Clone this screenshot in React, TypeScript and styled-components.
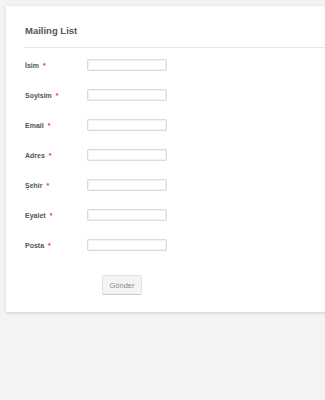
import styled, { createGlobalStyle } from "styled-components";

const GlobalStyle = createGlobalStyle`
	html, body {
		margin: 0;
		padding: 0;
		background: #f3f3f3;
		overflow: hidden;
		font-family: "Liberation Sans", Arial, sans-serif;
	}
`;

const fields = ["İsim", "Soyisim", "Email", "Adres", "Şehir", "Eyalet", "Posta"];

const App = () => {
	return (
		<>
			<GlobalStyle />
			<Page>
				<Card>
					<Header>
						<Title>Mailing List</Title>
					</Header>
					<Form>
						{fields.map((field) => (
							<Row key={field}>
								<Label>
									{field}
									<Required>*</Required>
								</Label>
								<Input type="text" />
							</Row>
						))}
						<ButtonRow>
							<SubmitButton type="button">Gönder</SubmitButton>
						</ButtonRow>
					</Form>
				</Card>
			</Page>
		</>
	);
};

export default App;

const Page = styled.div`
	width: 325px;
	height: 400px;
	padding: 6px 0 0 6px;
	box-sizing: border-box;
	overflow: hidden;
`;

const Card = styled.div`
	width: 360px;
	padding: 18px 0 17px 18px;
	box-sizing: border-box;
	background: #ffffff;
	box-shadow: 0 1px 3px rgba(0, 0, 0, 0.16);
`;

const Header = styled.div`
	padding: 0 0 10px 1px;
	border-bottom: 1px solid #e6e6e6;
`;

const Title = styled.h1`
	margin: 0;
	font-size: 9.5px;
	line-height: 13px;
	font-weight: 700;
	color: #555555;
`;

const Form = styled.form`
	display: flex;
	flex-direction: column;
	gap: 18px;
	padding: 11px 0 0 1px;
`;

const Row = styled.div`
	display: flex;
	align-items: center;
	height: 12px;
`;

const Label = styled.label`
	width: 62px;
	font-size: 7px;
	font-weight: 700;
	color: #555555;
`;

const Required = styled.span`
	margin-left: 4px;
	color: #e03c3c;
`;

const Input = styled.input`
	width: 80px;
	height: 12px;
	margin: 0;
	padding: 0;
	box-sizing: border-box;
	border: 1px solid #dcdcdc;
	border-radius: 1px;
	box-shadow: inset 0 0 0 1px #f2f2f2;
	background: #ffffff;
	outline: none;
`;

const ButtonRow = styled.div`
	display: flex;
	padding: 6px 0 0 77px;
`;

const SubmitButton = styled.button`
	width: 40px;
	height: 20px;
	padding: 0;
	border: 1px solid #e0e0e0;
	border-bottom: 1px dotted #a8a8a8;
	border-radius: 2px;
	background: #f4f4f4;
	font-family: "Liberation Sans", Arial, sans-serif;
	font-size: 7.5px;
	color: #888888;
`;
